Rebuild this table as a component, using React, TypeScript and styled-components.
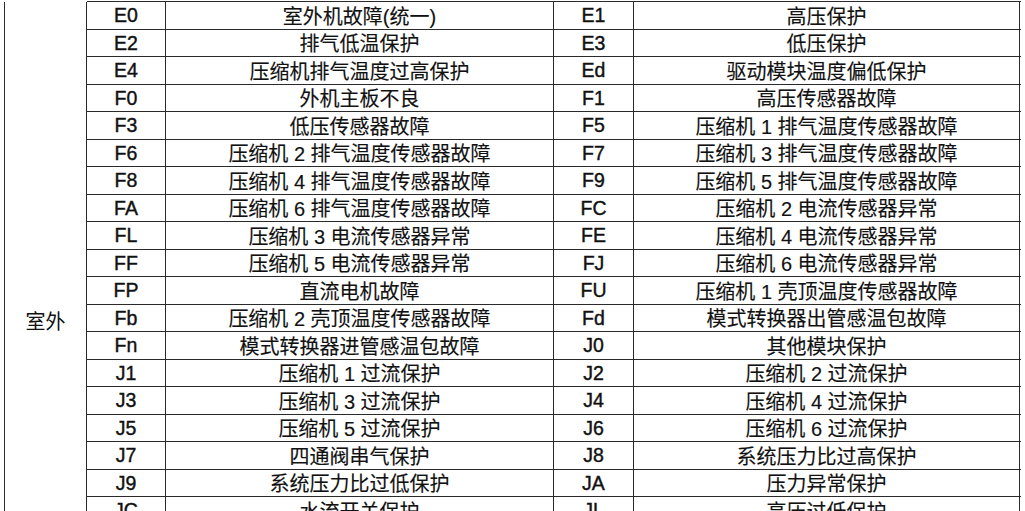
import styled, { createGlobalStyle } from "styled-components";

const GlobalStyle = createGlobalStyle`
  html, body {
    margin: 0;
    padding: 0;
    background: #ffffff;
  }
  body {
    font-family: "Liberation Sans", "Noto Sans CJK SC", sans-serif;
    color: #111111;
  }
`;

interface FaultRow {
  code: string;
  text: string;
  code2: string;
  text2: string;
}

const rows: FaultRow[] = [
  { code: "E0", text: "室外机故障(统一)", code2: "E1", text2: "高压保护" },
  { code: "E2", text: "排气低温保护", code2: "E3", text2: "低压保护" },
  { code: "E4", text: "压缩机排气温度过高保护", code2: "Ed", text2: "驱动模块温度偏低保护" },
  { code: "F0", text: "外机主板不良", code2: "F1", text2: "高压传感器故障" },
  { code: "F3", text: "低压传感器故障", code2: "F5", text2: "压缩机 1 排气温度传感器故障" },
  { code: "F6", text: "压缩机 2 排气温度传感器故障", code2: "F7", text2: "压缩机 3 排气温度传感器故障" },
  { code: "F8", text: "压缩机 4 排气温度传感器故障", code2: "F9", text2: "压缩机 5 排气温度传感器故障" },
  { code: "FA", text: "压缩机 6 排气温度传感器故障", code2: "FC", text2: "压缩机 2 电流传感器异常" },
  { code: "FL", text: "压缩机 3 电流传感器异常", code2: "FE", text2: "压缩机 4 电流传感器异常" },
  { code: "FF", text: "压缩机 5 电流传感器异常", code2: "FJ", text2: "压缩机 6 电流传感器异常" },
  { code: "FP", text: "直流电机故障", code2: "FU", text2: "压缩机 1 壳顶温度传感器故障" },
  { code: "Fb", text: "压缩机 2 壳顶温度传感器故障", code2: "Fd", text2: "模式转换器出管感温包故障" },
  { code: "Fn", text: "模式转换器进管感温包故障", code2: "J0", text2: "其他模块保护" },
  { code: "J1", text: "压缩机 1 过流保护", code2: "J2", text2: "压缩机 2 过流保护" },
  { code: "J3", text: "压缩机 3 过流保护", code2: "J4", text2: "压缩机 4 过流保护" },
  { code: "J5", text: "压缩机 5 过流保护", code2: "J6", text2: "压缩机 6 过流保护" },
  { code: "J7", text: "四通阀串气保护", code2: "J8", text2: "系统压力比过高保护" },
  { code: "J9", text: "系统压力比过低保护", code2: "JA", text2: "压力异常保护" },
  { code: "JC", text: "水流开关保护", code2: "JL", text2: "高压过低保护" },
];

const App = () => {
  return (
    <>
      <GlobalStyle />
      <Page>
        <Table>
          <SideCell $rows={rows.length}>室外</SideCell>
          {rows.map((r, i) => (
            <Row key={r.code} $first={i === 0}>
              <CodeCell>{r.code}</CodeCell>
              <TextCell>{r.text}</TextCell>
              <CodeCell>{r.code2}</CodeCell>
              <TextCell>{r.text2}</TextCell>
            </Row>
          ))}
        </Table>
      </Page>
    </>
  );
};

const Page = styled.div`
  width: 1025px;
  height: 511px;
  overflow: hidden;
  padding: 2px 0 0 4px;
  box-sizing: border-box;
`;

const Table = styled.div`
  display: grid;
  grid-template-columns: 82px 1fr;
  grid-auto-rows: 27.5px;
  width: 1016px;
  border-left: 1.5px solid #2a2a2a;
`;

const SideCell = styled.div<{ $rows: number }>`
  grid-column: 1;
  grid-row: 1 / span ${(p) => p.$rows};
  border-right: 1.5px solid #2a2a2a;
  box-sizing: border-box;
  text-align: center;
  padding-top: 307px;
  font-size: 20px;
  line-height: 26px;
`;

const Row = styled.div<{ $first: boolean }>`
  grid-column: 2;
  display: grid;
  grid-template-columns: 79px 388px 80px 386px;
  border-bottom: 1.5px solid #2a2a2a;
  border-top: ${(p) => (p.$first ? "1.5px solid #2a2a2a" : "none")};
  margin-top: ${(p) => (p.$first ? "-1.5px" : "0")};
  box-sizing: border-box;
`;

const Cell = styled.div`
  display: flex;
  align-items: center;
  justify-content: center;
  border-right: 1.5px solid #2a2a2a;
  box-sizing: border-box;
  white-space: nowrap;
  overflow: hidden;
`;

const CodeCell = styled(Cell)`
  font-size: 19.5px;
  -webkit-text-stroke: 0.4px #111111;
  padding-top: 1px;
`;

const TextCell = styled(Cell)`
  font-size: 20px;
  -webkit-text-stroke: 0.15px #111111;
`;

export default App;
